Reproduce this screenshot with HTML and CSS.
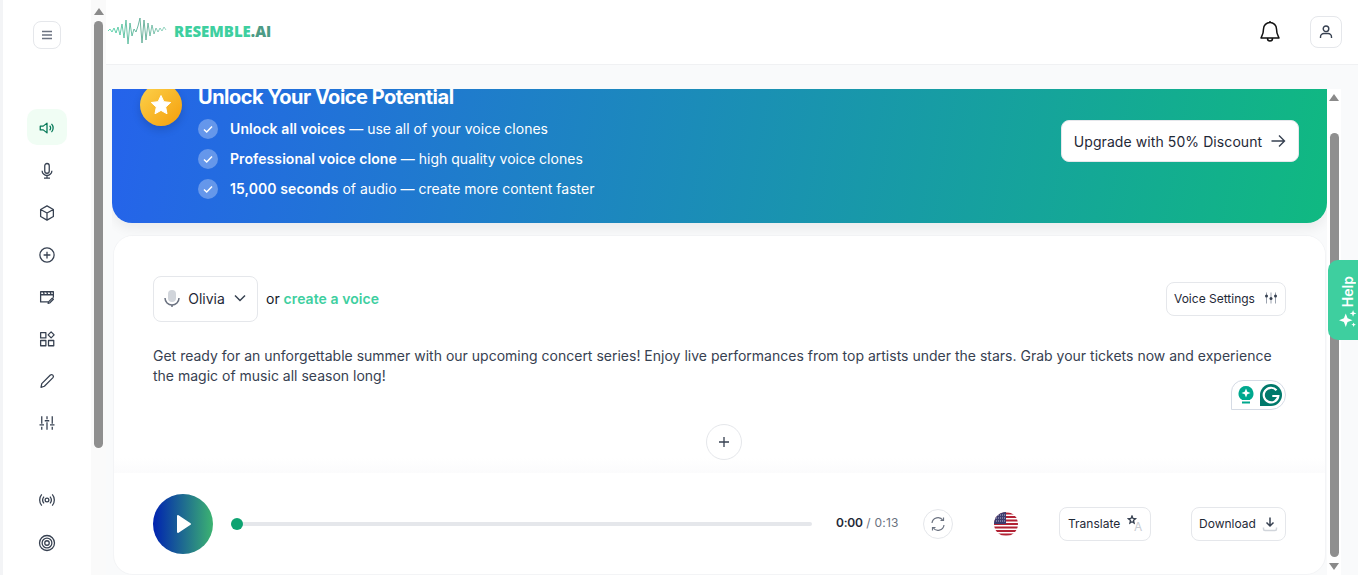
FILE: index.html
```html
<!DOCTYPE html>
<html lang="en">
<head>
<meta charset="utf-8">
<title>Resemble AI</title>
<link rel="stylesheet" href="styles.css">
</head>
<body>
<div class="app">
  <aside class="sidebar">
    <button class="menu-btn" aria-label="menu"><svg width="14" height="14" viewBox="0 0 14 14"><path d="M2 3.500h10M2 7h10M2 10.500h10" stroke="#6b7280" stroke-width="1.600"/></svg></button>
    <nav class="nav">
      <a class="nav-item active"><svg class="ic green" viewBox="0 0 24 24"><path d="M3 9.500v5h4l5 4v-13l-5 4z"/><path d="M15.500 9a4 4 0 0 1 0 6M18 6.500a8 8 0 0 1 0 11"/></svg></a>
      <a class="nav-item"><svg class="ic" viewBox="0 0 24 24"><rect x="9" y="2" width="6" height="13" rx="3"/><path d="M5.500 11.500a6.500 6.500 0 0 0 13 0M12 18v3.500M8 21.500h8"/></svg></a>
      <a class="nav-item"><svg class="ic" viewBox="0 0 24 24"><path d="M12 2.500l8.500 4.800v9.400L12 21.500l-8.500-4.800V7.300zM3.500 7.300L12 12l8.500-4.700M12 12v9.500"/></svg></a>
      <a class="nav-item"><svg class="ic" viewBox="0 0 24 24"><circle cx="12" cy="12" r="9.500"/><path d="M12 7.500v9M7.500 12h9"/></svg></a>
      <a class="nav-item"><svg class="ic" viewBox="0 0 24 24"><path d="M20.500 13V5h-17v13.500h10M3.500 9h17M7 5l1.500 4M11.500 5l1.500 4M16 5l1.500 4M15.500 20l5-5-1.500-1.500-5 5-.5 2z"/></svg></a>
      <a class="nav-item"><svg class="ic" viewBox="0 0 24 24"><rect x="3.500" y="3.500" width="7" height="7"/><rect x="3.500" y="14" width="7" height="7"/><rect x="14" y="14" width="7" height="7"/><path d="M17.500 2.500l4 4-4 4-4-4z"/></svg></a>
      <a class="nav-item"><svg class="ic" viewBox="0 0 24 24"><path d="M4 20.500l1-5L16.500 4a2.500 2.500 0 0 1 3.500 3.500L8.500 19z"/></svg></a>
      <a class="nav-item"><svg class="ic" viewBox="0 0 24 24"><path d="M5 3v10M5 17v4M12 3v4M12 11v10M19 3v10M19 17v4M2 14.500h6M9 9h6M16 14.500h6"/></svg></a>
    </nav>
    <div class="nav-bottom">
      <a class="nav-item"><svg class="ic" viewBox="0 0 24 24"><circle cx="12" cy="12" r="2.500"/><path d="M8 7.500a7 7 0 0 0 0 9M16 7.500a7 7 0 0 1 0 9M5 4.500a11.500 11.500 0 0 0 0 15M19 4.500a11.500 11.500 0 0 1 0 15"/></svg></a>
      <a class="nav-item"><svg class="ic" viewBox="0 0 24 24"><circle cx="12" cy="12" r="10"/><circle cx="12" cy="12" r="6.500"/><circle cx="12" cy="12" r="3"/></svg></a>
    </div>
  </aside>
  <div class="scrollbar">
    <span class="arrow up"></span>
    <span class="thumb side-thumb"></span>
  </div>
  <div class="main">
    <header class="topbar">
      <div class="brand">
        <svg class="wave" width="60" height="30" viewBox="0 0 60 30"><defs><linearGradient id="wg" x1="0" x2="1" y1="0" y2="0"><stop offset="0" stop-color="#3ecf9f"/><stop offset=".6" stop-color="#4a9f86"/><stop offset="1" stop-color="#7fcfb5"/></linearGradient></defs><polyline fill="none" stroke="url(#wg)" stroke-width=".8" points="1,15 3,13 5,16 7,12 9,17 11,11 13,19 15,8 17,22 19,4 21,28 23,7 25,20 27,13 29,16 31,10 33,2 35,27 37,4 39,24 41,7 43,20 45,9 47,18 49,12 51,16 53,12 55,15 57,11 59,14"/></svg>
        <span class="brand-name">RESEMBLE<span class="brand-dark">.AI</span></span>
      </div>
      <div class="top-actions">
        <svg class="bell" width="22" height="24" viewBox="0 0 22 24"><path d="M11 2.500a6.500 6.500 0 0 0-6.500 6.500c0 6-2.500 8-2.500 9h18c0-1-2.500-3-2.500-9A6.500 6.500 0 0 0 11 2.500zM8.500 18.500a2.500 2.500 0 0 0 5 0M11 1v1.500" fill="none" stroke="#111" stroke-width="1.500" stroke-linejoin="round"/></svg>
        <button class="user-btn" aria-label="account"><svg width="16" height="16" viewBox="0 0 16 16" fill="none" stroke="#374151" stroke-width="1.400"><circle cx="8" cy="4.800" r="2.800"/><path d="M2.500 14v-1a3.500 3.500 0 0 1 3.500-3.500h4a3.500 3.500 0 0 1 3.500 3.500v1"/></svg></button>
      </div>
    </header>
    <div class="workspace">
      <div class="scroll-view">
        <section class="banner">
          <span class="star"><svg width="24" height="24" viewBox="0 0 24 24"><path d="M12 2.500l2.900 6.200 6.800.8-5 4.600 1.300 6.700-6-3.400-6 3.400 1.300-6.700-5-4.600 6.800-.8z" fill="#fff" stroke="#fff" stroke-linejoin="round"/></svg></span>
          <div class="banner-copy">
            <h2 class="banner-title">Unlock Your Voice Potential</h2>
            <ul class="perks">
              <li><span class="check"><svg width="12" height="12" viewBox="0 0 12 12"><path d="M2 6.500l2.700 2.500L10 3.500" fill="none" stroke="#fff" stroke-width="1.500"/></svg></span><span><b>Unlock all voices</b> — use all of your voice clones</span></li>
              <li><span class="check"><svg width="12" height="12" viewBox="0 0 12 12"><path d="M2 6.500l2.700 2.500L10 3.500" fill="none" stroke="#fff" stroke-width="1.500"/></svg></span><span><b>Professional voice clone</b> — high quality voice clones</span></li>
              <li><span class="check"><svg width="12" height="12" viewBox="0 0 12 12"><path d="M2 6.500l2.700 2.500L10 3.500" fill="none" stroke="#fff" stroke-width="1.500"/></svg></span><span><b>15,000 seconds</b> of audio — create more content faster</span></li>
            </ul>
          </div>
          <button class="upgrade">Upgrade with 50% Discount<svg width="16" height="16" viewBox="0 0 16 16" fill="none" stroke="#374151" stroke-width="1.400"><path d="M1.500 8h13M9 2.500L14.500 8 9 13.500"/></svg></button>
        </section>
        <section class="card">
          <div class="editor">
            <div class="voice-row">
              <button class="voice-select">
                <svg width="20" height="20" viewBox="0 0 20 20"><rect x="6" y="2" width="8" height="12" rx="4" fill="#d1d5db"/><path d="M3 10a7 7 0 0 0 14 0" fill="none" stroke="#6b7280" stroke-width="1.500"/><path d="M10 17v2" stroke="#6b7280" stroke-width="1.500"/></svg>
                <span class="voice-name">Olivia</span>
                <svg width="14" height="14" viewBox="0 0 14 14"><path d="M2 4.500l5 5 5-5" fill="none" stroke="#374151" stroke-width="1.500"/></svg>
              </button>
              <span class="or">or <a class="create">create a voice</a></span>
              <button class="pill settings">Voice Settings<svg width="14" height="14" viewBox="0 0 14 14" stroke="#9ca3af" fill="#374151"><path d="M2.500 1.500v11M7 1.500v11M11.500 1.500v11" stroke-width="1"/><circle cx="2.500" cy="5" r="1.500" stroke="none"/><circle cx="7" cy="7.500" r="1.500" stroke="none"/><circle cx="11.500" cy="5" r="1.500" stroke="none"/></svg></button>
            </div>
            <p class="script">Get ready for an unforgettable summer with our upcoming concert series! Enjoy live performances from top artists under the stars. Grab your tickets now and experience the magic of music all season long!</p>
            <div class="grammarly">
              <svg width="16" height="20" viewBox="0 0 16 20"><path d="M8 1a7.500 7.500 0 0 0-4 13.800V15h8v-.2A7.500 7.500 0 0 0 8 1z" fill="#00a88e"/><path d="M8 3.500l1.300 3.200L12.500 8 9.300 9.300 8 12.500 6.700 9.300 3.500 8l3.200-1.300z" fill="#fff"/><rect x="4" y="16.500" width="8" height="2" fill="#00a88e"/></svg>
              <span class="g-logo"><svg width="22" height="22" viewBox="0 0 22 22"><path d="M16.500 6.200A7.300 7.300 0 1 0 18.300 12h-6" fill="none" stroke="#fff" stroke-width="2.200"/></svg></span>
            </div>
            <button class="add" aria-label="add"><svg width="14" height="14" viewBox="0 0 14 14"><path d="M7 2v10M2 7h10" stroke="#374151" stroke-width="1.300"/></svg></button>
          </div>
          <div class="player">
            <button class="play" aria-label="play"><svg width="16" height="20" viewBox="0 0 16 20"><path d="M2 2l12 8-12 8z" fill="#fff" stroke="#fff" stroke-width="2" stroke-linejoin="round"/></svg></button>
            <div class="track"><span class="knob"></span></div>
            <span class="time"><b>0:00</b> / 0:13</span>
            <button class="refresh" aria-label="regenerate"><svg width="16" height="16" viewBox="0 0 16 16" fill="none" stroke="#6b7280" stroke-width="1.200"><path d="M2 7a6 6 0 0 1 11-2.500M14 9a6 6 0 0 1-11 2.500"/><path d="M13.500 1.500v3h-3M2.500 14.500v-3h3"/></svg></button>
            <svg class="flag" width="24" height="24" viewBox="0 0 24 24"><defs><clipPath id="fc"><circle cx="12" cy="12" r="12"/></clipPath></defs><g clip-path="url(#fc)"><rect width="24" height="24" fill="#fff"/><path d="M0 1.500h24M0 5h24M0 8.500h24M0 12h24M0 15.500h24M0 19h24M0 22.500h24" stroke="#b22234" stroke-width="1.800"/><rect width="12" height="12" fill="#3c3b6e"/><path d="M2 3h9M2 6h9M2 9h9" stroke="#d8d8e8" stroke-width=".8" stroke-dasharray="1 1"/></g></svg>
            <button class="pill translate">Translate<svg width="16" height="18" viewBox="0 0 16 18"><path d="M5 1l1 2.500 2.500.3-2 1.700.6 2.500L5 6.700 2.900 8l.6-2.500-2-1.700L4 3.500z" fill="none" stroke="#374151" stroke-width="1.300"/><text x="7" y="16" class="translate-a">A</text></svg></button>
            <button class="pill download">Download<svg width="16" height="16" viewBox="0 0 16 16" fill="none"><path d="M8 1.500v8M4.500 6.500L8 10l3.500-3.500" stroke="#374151" stroke-width="1.500"/><path d="M1.500 11.500v1.500a1.500 1.500 0 0 0 1.500 1.500h10a1.500 1.500 0 0 0 1.500-1.500v-1.500" stroke="#d1d5db" stroke-width="1.500"/></svg></button>
          </div>
        </section>
      </div>
      <div class="scrollbar right">
        <span class="arrow up"></span>
        <span class="thumb main-thumb"></span>
        <span class="arrow down"></span>
      </div>
    </div>
  </div>
</div>
<a class="help"><span>Help</span><svg width="18" height="18" viewBox="0 0 16 16" fill="#fff"><path d="M6 3l1.600 4.400L12 9l-4.400 1.600L6 15l-1.600-4.400L0 9l4.400-1.600z"/><path d="M12.500 0l.8 2.200 2.200.8-2.200.8-.8 2.200-.8-2.200L9.500 3l2.200-.8zM13 11l.6 1.400 1.400.6-1.400.6L13 15l-.6-1.400L11 13l1.400-.6z"/></svg></a>
</body>
</html>
```

FILE: styles.css
```css
* { box-sizing: border-box; }
html, body { margin: 0; height: 575px; overflow: hidden; }
body { font-family: Inter, "Liberation Sans", sans-serif; background: #f9fafb; color: #1f2937; }
button { font-family: inherit; cursor: pointer; }
.app { display: flex; height: 575px; padding-left: 3px; background: #f3f4f6; }

.sidebar { width: 88px; flex: none; background: #fff; display: flex; flex-direction: column; align-items: center; padding-top: 21px; }
.menu-btn { width: 28px; height: 28px; padding: 0; border: 1px solid #e5e7eb; border-radius: 8px; background: #fff; display: flex; align-items: center; justify-content: center; }
.nav { display: flex; flex-direction: column; margin-top: 57px; }
.nav-bottom { display: flex; flex-direction: column; margin-top: 35px; gap: 1px; }
.nav-item { width: 40px; height: 36px; margin: 3px 0; padding-top: 4px; border-radius: 10px; display: flex; align-items: center; justify-content: center; }
.nav-item.active { background: #f0fdf4; padding-top: 2px; }
.ic { width: 18px; height: 18px; fill: none; stroke: #374151; stroke-width: 1.700; stroke-linejoin: round; }
.ic.green { stroke: #047857; }

.scrollbar { width: 15px; flex: none; background: #fafafa; position: relative; display: flex; flex-direction: column; align-items: center; }
.arrow { width: 0; height: 0; border-left: 5px solid transparent; border-right: 5px solid transparent; margin-top: 8px; }
.arrow.up { border-bottom: 7px solid #8a8a8a; }
.arrow.down { border-top: 7px solid #8a8a8a; margin-top: 6px; }
.thumb { width: 9px; background: #8f8f8f; border-radius: 5px; }
.side-thumb { height: 427px; margin-top: 6px; }

.main { flex: 1; min-width: 0; display: flex; flex-direction: column; background: #f9fafb; }
.topbar { height: 65px; flex: none; background: #fff; border-bottom: 1px solid #f0f1f3; display: flex; align-items: center; justify-content: space-between; padding: 0 16px 0 1px; }
.brand { display: flex; align-items: center; gap: 7px; margin-top: -2px; }
.brand-name { font-family: "Open Sans", sans-serif; font-weight: 800; font-size: 15px; color: #3ecf9f; }
.brand-dark { color: #4d9b85; }
.top-actions { display: flex; align-items: center; gap: 29px; }
.bell { display: block; }
.user-btn { width: 32px; height: 32px; padding: 0; border: 1px solid #e5e7eb; border-radius: 8px; background: #fff; display: flex; align-items: center; justify-content: center; }

.workspace { flex: 1; min-height: 0; display: flex; padding: 24px 17px 0 6px; }
.scroll-view { width: 1215px; flex: none; overflow: hidden; }
.scrollbar.right { width: 14px; background: #fff; }
.scrollbar.right .arrow.up { margin-top: 5px; }
.main-thumb { height: 424px; margin-top: 32px; }

.banner { height: 134px; border-radius: 0 0 20px 20px; background: linear-gradient(100deg, #2563eb 0%, #10b981 100%); position: relative; color: #fff; display: flex; align-items: flex-start; padding-left: 28px; box-shadow: 0 6px 12px rgba(0,0,0,.06); }
.star { width: 42px; height: 42px; margin-top: -5px; flex: none; border-radius: 50%; background: linear-gradient(135deg, #fcd34d, #f59e0b); display: flex; align-items: center; justify-content: center; box-shadow: 0 4px 8px rgba(0,0,0,.15); }
.banner-copy { margin-left: 16px; margin-top: -6px; }
.banner-title { margin: 0 0 8px; font-size: 20px; line-height: 28px; font-weight: 700; letter-spacing: -.5px; }
.perks { list-style: none; margin: 0; padding: 0; display: flex; flex-direction: column; gap: 10px; font-size: 14px; line-height: 20px; letter-spacing: .015px; }
.perks li { display: flex; align-items: center; gap: 12px; }
.perks b { font-weight: 600; letter-spacing: .08px; }
.check { width: 20px; height: 20px; border-radius: 50%; background: rgba(255,255,255,.3); display: flex; align-items: center; justify-content: center; }
.upgrade { position: absolute; left: 949px; top: 31px; height: 42px; width: 238px; padding: 0; border: 1px solid #e5e7eb; border-radius: 8px; background: #fff; color: #1f2937; font-size: 14px; letter-spacing: .08px; display: flex; align-items: center; justify-content: center; gap: 8px; }

.card { margin: 12px 1px 0; height: 340px; border: 1px solid #f3f4f6; border-radius: 20px; background: #fff; display: flex; flex-direction: column; overflow: hidden; }
.editor { height: 237px; flex: none; padding: 40px 39px 0; position: relative; background: linear-gradient(#fff 222px, #fbfbfc 237px); }
.voice-row { display: flex; align-items: center; gap: 8px; }
.voice-select { width: 105px; height: 46px; padding: 0 10px 2px 8px; border: 1px solid #e5e7eb; border-radius: 8px; background: #fff; color: #1f2937; font-size: 14px; display: flex; align-items: center; justify-content: space-between; }
.voice-name { margin-right: 2px; }
.or { font-size: 14px; color: #111827; padding-bottom: 2px; }
.create { color: #3ecf9f; font-weight: 600; letter-spacing: .06px; }
.pill { height: 34px; padding: 0 7px 2px; border: 1px solid #e5e7eb; border-radius: 8px; background: #fff; color: #1f2937; font-size: 12px; display: flex; align-items: center; justify-content: space-between; flex: none; }
.settings { width: 120px; margin-left: auto; }
.script { margin: 24px 0 0; font-size: 14px; line-height: 20px; color: #374151; letter-spacing: .004px; }
.grammarly { position: absolute; left: 1117px; top: 144px; width: 55px; height: 30px; background: #fff; border: 1px solid #d5dbe5; border-radius: 12px 15px 15px 0; display: flex; align-items: center; justify-content: flex-end; gap: 6px; padding: 0 3px 1px 0; }
.g-logo { width: 22px; height: 22px; background: #00796b; border-radius: 50% 50% 50% 0; display: flex; }
.add { position: absolute; left: 592px; top: 188px; width: 36px; height: 36px; padding: 0; border: 1px solid #e5e7eb; border-radius: 50%; background: #fff; display: flex; align-items: center; justify-content: center; }

.player { flex: 1; display: flex; align-items: center; padding: 0 39px; }
.play { width: 60px; height: 60px; padding: 0 0 0 1px; border: 0; border-radius: 50%; background: linear-gradient(90deg, #0022b0, #3cb371); flex: none; display: flex; align-items: center; justify-content: center; }
.track { width: 581px; margin-left: 18px; height: 4px; border-radius: 2px; background: #e5e7eb; position: relative; flex: none; }
.knob { position: absolute; left: 0; top: -4px; width: 12px; height: 12px; border-radius: 50%; background: #0ea371; }
.time { margin-left: 24px; padding-bottom: 2px; font-size: 12px; letter-spacing: .25px; color: #6b7280; width: 64px; flex: none; }
.time b { color: #1f2937; font-weight: 600; letter-spacing: -.25px; }
.refresh { width: 30px; height: 30px; margin-left: 23px; padding: 0; border: 1px solid #e5e7eb; border-radius: 50%; background: #fff; flex: none; display: flex; align-items: center; justify-content: center; }
.flag { margin-left: 41px; flex: none; }
.translate { width: 92px; margin-left: 41px; padding: 0 7px 0 8px; }
.translate-a { font-family: Inter, sans-serif; font-size: 12px; fill: #c8ccd2; }
.download { width: 95px; margin-left: 40px; padding-bottom: 0; }

.help { position: absolute; left: 1328px; top: 260px; width: 30px; height: 80px; padding: 4px 0 0 9px; background: #3ecf9f; border-radius: 10px 0 0 10px; color: #fff; font-size: 14px; font-weight: 600; display: flex; flex-direction: column; align-items: center; justify-content: center; gap: 3px; }
.help span { writing-mode: vertical-rl; transform: rotate(180deg); }
```
